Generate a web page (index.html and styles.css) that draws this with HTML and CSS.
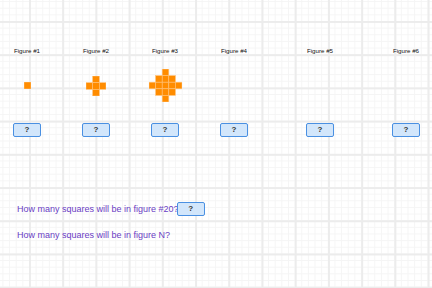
FILE: index.html
```html
<html lang="en">
<head>
  <meta charset="UTF-8">
  <title>Square Patterns</title>
  <link rel="stylesheet" href="styles.css">
</head>
<body>
  <div class="figures">
    <div class="figure">
      <div class="label">Figure #1</div>
      <div class="shape">
        <svg width="7" height="7" viewBox="0 0 6.6 6.6">
          <rect class="sq" x="0" y="0" width="6.6" height="6.6"/>
        </svg>
      </div>
      <div class="answer">?</div>
    </div>
    <div class="figure">
      <div class="label">Figure #2</div>
      <div class="shape">
        <svg width="20" height="20" viewBox="0 0 19.8 19.8">
          <rect class="sq" x="6.6" y="0" width="6.6" height="6.6"/>
          <rect class="sq" x="0" y="6.6" width="6.6" height="6.6"/>
          <rect class="sq" x="6.6" y="6.6" width="6.6" height="6.6"/>
          <rect class="sq" x="13.2" y="6.6" width="6.6" height="6.6"/>
          <rect class="sq" x="6.6" y="13.2" width="6.6" height="6.6"/>
        </svg>
      </div>
      <div class="answer">?</div>
    </div>
    <div class="figure">
      <div class="label">Figure #3</div>
      <div class="shape">
        <svg width="33" height="33" viewBox="0 0 33 33">
          <rect class="sq" x="13.2" y="0" width="6.6" height="6.6"/>
          <rect class="sq" x="6.6" y="6.6" width="6.6" height="6.6"/>
          <rect class="sq" x="13.2" y="6.6" width="6.6" height="6.6"/>
          <rect class="sq" x="19.8" y="6.6" width="6.6" height="6.6"/>
          <rect class="sq" x="0" y="13.2" width="6.6" height="6.6"/>
          <rect class="sq" x="6.6" y="13.2" width="6.6" height="6.6"/>
          <rect class="sq" x="13.2" y="13.2" width="6.6" height="6.6"/>
          <rect class="sq" x="19.8" y="13.2" width="6.6" height="6.6"/>
          <rect class="sq" x="26.4" y="13.2" width="6.6" height="6.6"/>
          <rect class="sq" x="6.6" y="19.8" width="6.6" height="6.6"/>
          <rect class="sq" x="13.2" y="19.8" width="6.6" height="6.6"/>
          <rect class="sq" x="19.8" y="19.8" width="6.6" height="6.6"/>
          <rect class="sq" x="13.2" y="26.4" width="6.6" height="6.6"/>
        </svg>
      </div>
      <div class="answer">?</div>
    </div>
    <div class="figure">
      <div class="label">Figure #4</div>
      <div class="shape"></div>
      <div class="answer">?</div>
    </div>
    <div class="figure far">
      <div class="label">Figure #5</div>
      <div class="shape"></div>
      <div class="answer">?</div>
    </div>
    <div class="figure far">
      <div class="label">Figure #6</div>
      <div class="shape"></div>
      <div class="answer">?</div>
    </div>
  </div>

  <div class="questions">
    <div class="question">
      <span>How many squares will be in figure #20?</span>
      <div class="answer inline">?</div>
    </div>
    <div class="question">
      <span>How many squares will be in figure N?</span>
    </div>
  </div>
</body>
</html>
```
FILE: styles.css
```css
body {
  margin: 0;
  width: 432px;
  height: 288px;
  overflow: hidden;
  font-family: 'Liberation Sans', Arial, sans-serif;
  background-color: #fff;
  background-image:
    linear-gradient(#ececec 2px, transparent 2px),
    linear-gradient(90deg, #ececec 2px, transparent 2px),
    linear-gradient(#f5f5f5 1px, transparent 1px),
    linear-gradient(90deg, #f5f5f5 1px, transparent 1px);
  background-size: 33.23px 33.23px, 33.23px 33.23px, 6.646px 6.646px, 6.646px 6.646px;
  background-position: 29px 21px;
}

.figures {
  display: flex;
  padding-top: 47px;
  padding-left: 7px;
}

.figure {
  width: 40px;
  margin-left: 29px;
  display: flex;
  flex-direction: column;
  align-items: center;
}

.figure:first-child {
  margin-left: 0;
}

.figure.far {
  margin-left: 46px;
}

.label {
  font-size: 6.2px;
  line-height: 8px;
  color: #111;
  white-space: nowrap;
}

.shape {
  height: 61px;
  display: flex;
  align-items: center;
  justify-content: center;
}

.shape svg {
  display: block;
}

.sq {
  fill: #ff8c00;
  stroke: #ffc27a;
  stroke-width: 0.6;
}

.answer {
  margin-top: 7px;
  width: 28px;
  height: 14px;
  box-sizing: border-box;
  border: 1.5px solid #4a90e2;
  border-radius: 2px;
  background: #d2e6fb;
  color: #333;
  font-size: 8px;
  font-weight: bold;
  line-height: 11px;
  text-align: center;
}

.questions {
  margin-top: 65px;
  padding-left: 17px;
}

.question {
  display: flex;
  align-items: center;
  height: 14px;
  margin-bottom: 12px;
  font-size: 9px;
  color: #6a3dc4;
}

.answer.inline {
  margin-top: 0;
  margin-left: -2px;
}
```
